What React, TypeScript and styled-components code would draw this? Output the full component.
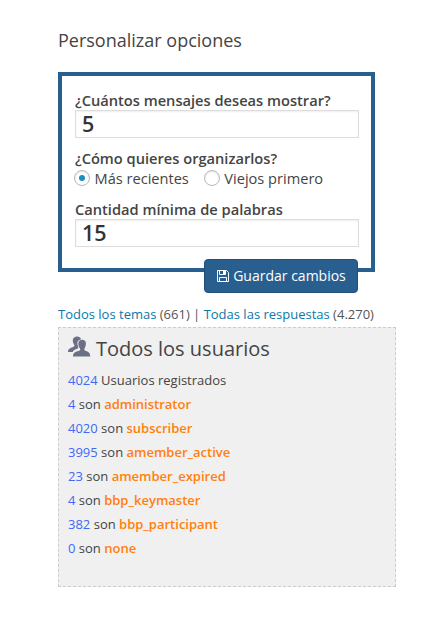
import React from "react";
import styled, { createGlobalStyle } from "styled-components";

const GlobalStyle = createGlobalStyle`
  * { box-sizing: border-box; }
  body {
    margin: 0;
    background: #fff;
    color: #444;
    font-family: "Open Sans", sans-serif;
    font-size: 13px;
  }
`;

const Page = styled.main`
  width: 437px;
  height: 622px;
  padding: 28px 41px 0 58px;
`;

const Title = styled.h2`
  margin: 0 0 20px;
  font-size: 18px;
  font-weight: 400;
  line-height: 24px;
  white-space: nowrap;
`;

const Form = styled.form`
  display: flex;
  flex-direction: column;
  width: 317px;
  height: 200px;
  padding: 15px 12px 0 13px;
  border: 4px solid #285f8f;
`;

const Label = styled.label`
  flex: none;
  height: 19px;
  font-size: 14.65px;
  font-weight: 600;
  line-height: 18px;
  white-space: nowrap;
`;

const NumberInput = styled.input`
  flex: none;
  width: 284px;
  height: 28px;
  margin: 0 0 11px;
  padding: 0 6px 2px;
  border: 1px solid #ddd;
  border-radius: 0;
  outline: none;
  background: #fff;
  box-shadow: inset 0 1px 2px rgba(0, 0, 0, 0.07);
  color: #333;
  font: 600 21.5px/24px "Open Sans", sans-serif;
`;

const Choices = styled.div`
  display: flex;
  flex: none;
  gap: 16px;
  height: 20px;
  margin-bottom: 12px;
`;

const Choice = styled.label`
  display: flex;
  gap: 4.5px;
  font-size: 14.6px;
  line-height: 21px;
  white-space: nowrap;
`;

const Radio = styled.input`
  appearance: none;
  display: grid;
  place-items: center;
  width: 16px;
  height: 16px;
  margin: 2px 0 0 -1px;
  border: 1px solid #b4b9be;
  border-radius: 50%;
  background: #fff;
  box-shadow: inset 0 1px 2px rgba(0, 0, 0, 0.1);

  &:checked::before {
    content: "";
    width: 6px;
    height: 6px;
    border-radius: 50%;
    background: #1e8cbe;
  }
`;

const SaveButton = styled.button`
  display: flex;
  flex: none;
  align-items: center;
  justify-content: center;
  align-self: flex-end;
  gap: 4px;
  width: 154px;
  height: 34px;
  margin: 1px 1px 0 0;
  padding: 0;
  border: 1px solid #20507a;
  border-radius: 4px;
  background: #285f8f;
  color: #fff;
  font: 400 14px/20px "Open Sans", sans-serif;
  white-space: nowrap;
`;

const Links = styled.nav`
  height: 18px;
  margin: 33px 0 4px;
  line-height: 18px;
  color: #555;
  white-space: nowrap;
`;

const Link = styled.a`
  color: #0a78aa;
`;

const Users = styled.section`
  width: 338px;
  height: 260px;
  padding: 7px 9px;
  border: 1px dashed #ccc;
  background: #f0f0f0;
`;

const UsersTitle = styled.h3`
  display: flex;
  gap: 5px;
  margin: 0 0 6px;
  font-size: 20px;
  font-weight: 400;
  line-height: 27px;
`;

const UserList = styled.ul`
  margin: 0;
  padding: 0;
  list-style: none;
`;

const UserRow = styled.li`
  height: 24px;
  line-height: 24px;
`;

const Count = styled.span`
  color: #4169f5;
`;

const Role = styled.strong`
  color: #ff7f0e;
  font-weight: 600;
`;

const roles = [
  ["4", "administrator"],
  ["4020", "subscriber"],
  ["3995", "amember_active"],
  ["23", "amember_expired"],
  ["4", "bbp_keymaster"],
  ["382", "bbp_participant"],
  ["0", "none"],
];

function UsersIcon() {
  return (
    <svg width="23" height="23" viewBox="0 0 23 23" fill="#6b7085">
      <path d="M0 17C0 13.500 3 13 5.500 11.800C7 11 6.500 10 5.500 8.500C4 5 5 1.800 9 1.500C11.500 1.500 13 3 13 4.200C9.500 5 8.700 8 10 11C10.800 13 10 13.500 8 14.200C6 15 5 15.800 4.700 17Z" />
      <path d="M5 21.500C5 17.500 7.500 17 11 15.800C13 15 12.300 14 11.300 12.500C9.500 9 10.300 5 14 4.800C18 4.800 18.700 8.500 17.200 12C16.300 14 15.700 15 17.500 15.800C20.500 17 22 17.500 22.300 21.500Z" />
    </svg>
  );
}

function SaveIcon() {
  return (
    <svg width="13" height="12" viewBox="0 0 13 12" fill="none" stroke="#fff">
      <path d="M1.500 .5H10.500L12.500 2.500V11.500H1.500Z" />
      <path d="M3.500 11V7.500H10.500V11M3.500 1V4.500H9.500V1" />
      <path d="M7 1H9V4H7Z" fill="#fff" stroke="none" />
    </svg>
  );
}

export default function App() {
  return (
    <>
      <GlobalStyle />
      <Page>
        <Title>Personalizar opciones</Title>
        <Form>
          <Label htmlFor="messages">¿Cuántos mensajes deseas mostrar?</Label>
          <NumberInput id="messages" defaultValue="5" />
          <Label as="span">¿Cómo quieres organizarlos?</Label>
          <Choices>
            <Choice>
              <Radio type="radio" name="order" defaultChecked />
              Más recientes
            </Choice>
            <Choice>
              <Radio type="radio" name="order" />
              Viejos primero
            </Choice>
          </Choices>
          <Label htmlFor="words">Cantidad mínima de palabras</Label>
          <NumberInput id="words" defaultValue="15" />
          <SaveButton type="button">
            <SaveIcon />
            Guardar cambios
          </SaveButton>
        </Form>
        <Links>
          <Link>Todos los temas</Link> (661) | <Link>Todas las respuestas</Link> (4.270)
        </Links>
        <Users>
          <UsersTitle>
            <UsersIcon />
            Todos los usuarios
          </UsersTitle>
          <UserList>
            <UserRow>
              <Count>4024</Count> Usuarios registrados
            </UserRow>
            {roles.map(([count, role]) => (
              <UserRow key={role}>
                <Count>{count}</Count> son <Role>{role}</Role>
              </UserRow>
            ))}
          </UserList>
        </Users>
      </Page>
    </>
  );
}
